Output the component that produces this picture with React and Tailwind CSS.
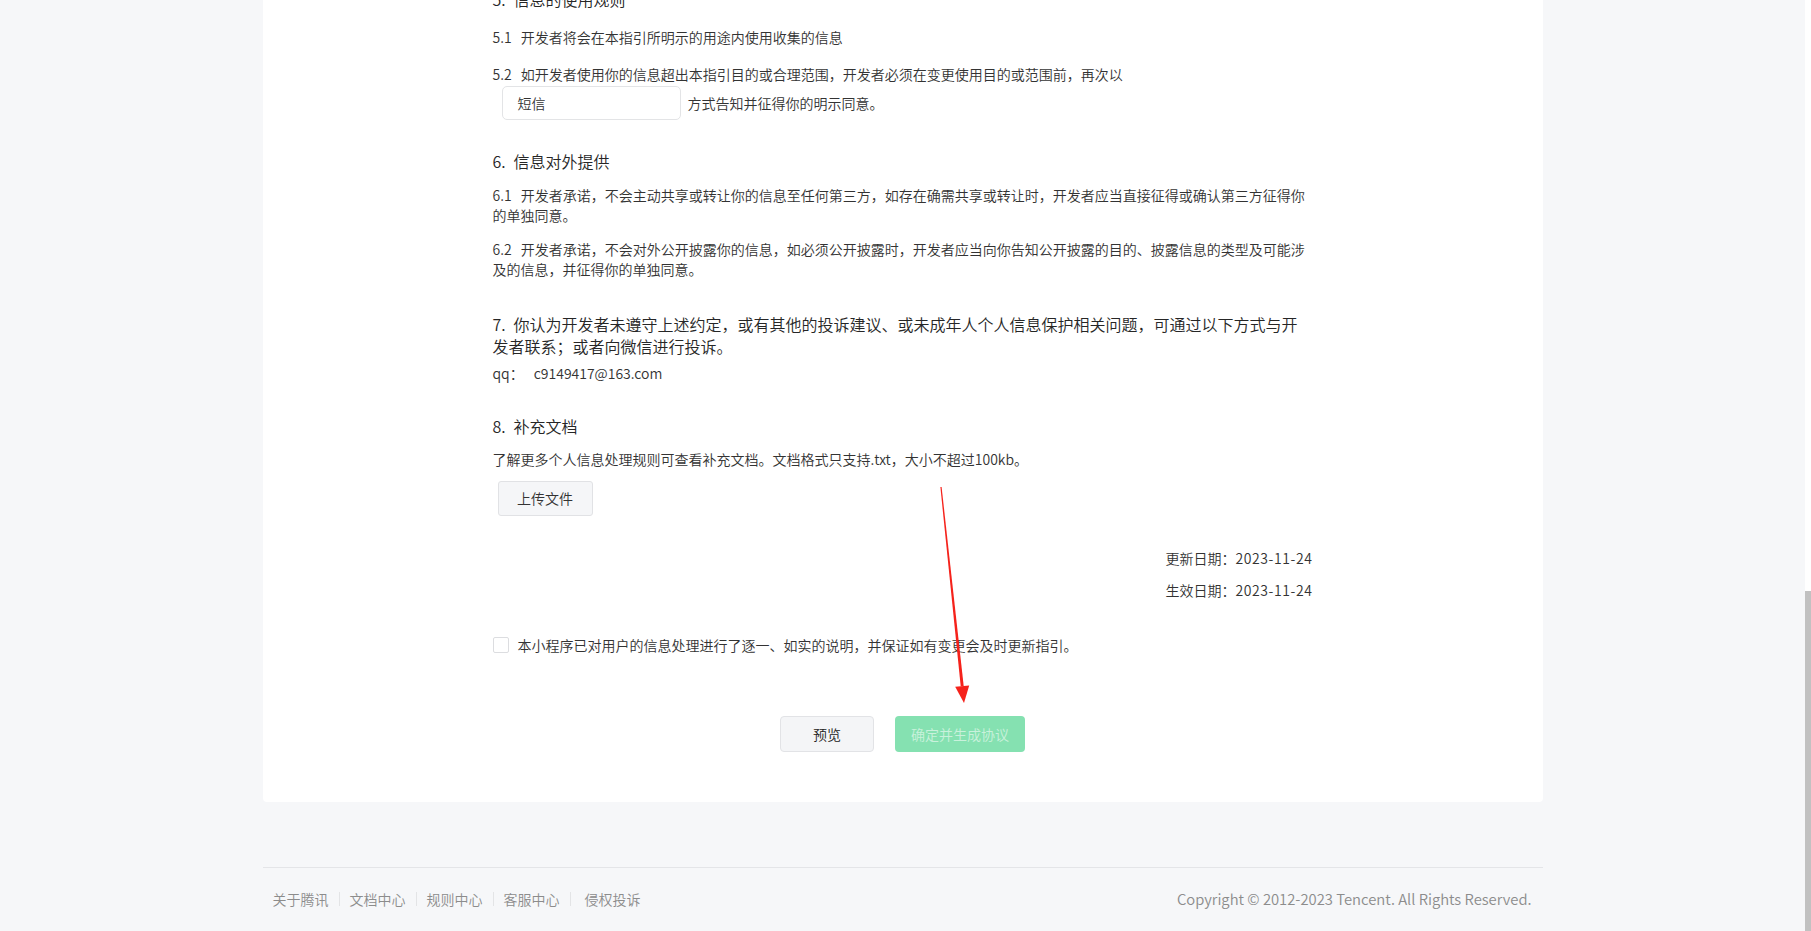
import React from "react";

const FONT = { fontFamily: '"Noto Sans CJK SC", "Noto Sans", sans-serif' };

function Heading({ num, children, className = "" }) {
  return (
    <h3 className={"text-[16px] leading-[24px] text-[#262626] font-[350] " + className}>
      <span className="mr-[8px]">{num}</span>
      {children}
    </h3>
  );
}

function Para({ num, children, className = "" }) {
  return (
    <p className={"text-[14px] leading-[20px] text-[#333] font-[350] " + className}>
      {num && <span className="mr-[9px]">{num}</span>}
      {children}
    </p>
  );
}

export default function App() {
  return (
    <div className="relative flex w-[1811px] h-[931px] bg-[#f6f7f9] overflow-hidden" style={FONT}>
      <div className="flex-1 h-full overflow-hidden flex flex-col items-center">
        {/* Card */}
        <div className="w-[1280px] bg-white rounded-b-[4px] flex flex-col pb-[50px]">
          <div className="w-[820px] mx-auto flex flex-col -mt-[13px]">
            <Heading num="5.">信息的使用规则</Heading>
            <Para num="5.1" className="mt-[16px]">开发者将会在本指引所明示的用途内使用收集的信息</Para>
            <Para num="5.2" className="mt-[17px]">
              如开发者使用你的信息超出本指引目的或合理范围，开发者必须在变更使用目的或范围前，再次以
            </Para>
            <div className="flex items-center pl-[9px] mt-[2px]">
              <div className="w-[179px] h-[34px] border border-[#e3e4e6] rounded-[5px] px-[15px] flex items-center text-[14px] text-[#333] font-[350]">
                短信
              </div>
              <span className="ml-[7px] text-[14px] leading-[20px] text-[#333] font-[350]">方式告知并征得你的明示同意。</span>
            </div>

            <Heading num="6." className="mt-[29px]">信息对外提供</Heading>
            <Para num="6.1" className="mt-[12px]">
              开发者承诺，不会主动共享或转让你的信息至任何第三方，如存在确需共享或转让时，开发者应当直接征得或确认第三方征得你的单独同意。
            </Para>
            <Para num="6.2" className="mt-[14px]">
              开发者承诺，不会对外公开披露你的信息，如必须公开披露时，开发者应当向你告知公开披露的目的、披露信息的类型及可能涉及的信息，并征得你的单独同意。
            </Para>

            <h3 className="mt-[34px] text-[16px] leading-[22px] text-[#262626] font-[350]">
              <span className="mr-[8px]">7.</span>
              你认为开发者未遵守上述约定，或有其他的投诉建议、或未成年人个人信息保护相关问题，可通过以下方式与开发者联系；或者向微信进行投诉。
            </h3>
            <p className="mt-[6px] text-[14px] leading-[20px] text-[#333] font-[350]">
              <span className="mr-[10px]">qq：</span>c9149417@163.com
            </p>

            <Heading num="8." className="mt-[31px]">补充文档</Heading>
            <Para className="mt-[11px]">了解更多个人信息处理规则可查看补充文档。文档格式只支持.txt，大小不超过100kb。</Para>
            <div className="mt-[12px] ml-[5px]">
              <button className="w-[95px] h-[35px] bg-[#f5f6f8] border border-[#e1e2e5] rounded-[3px] text-[14px] text-[#333] font-[350] flex items-center justify-center">
                上传文件
              </button>
            </div>

            <div className="mt-[32px] flex flex-col items-end text-[14px] leading-[20px] text-[#333] font-[350]">
              <p>更新日期：<span className="tracking-[0.6px]">2023-11-24</span></p>
              <p className="mt-[12px]">生效日期：<span className="tracking-[0.6px]">2023-11-24</span></p>
            </div>

            <div className="mt-[35px] flex items-center h-[20px]">
              <span className="w-[16px] h-[16px] border border-[#dcdde0] rounded-[2px] bg-white shrink-0" />
              <span className="ml-[9px] text-[14px] leading-[20px] text-[#333] font-[350]">
                本小程序已对用户的信息处理进行了逐一、如实的说明，并保证如有变更会及时更新指引。
              </span>
            </div>

            <div className="mt-[61px] flex justify-center gap-[21px]">
              <button className="w-[94px] h-[36px] bg-[#f4f5f7] border border-[#e2e3e6] rounded-[4px] text-[14px] text-[#222] font-[350] flex items-center justify-center">
                预览
              </button>
              <button className="w-[130px] h-[36px] bg-[#85e1b1] rounded-[4px] text-[14px] text-[#c9f1dc] font-[350] flex items-center justify-center">
                确定并生成协议
              </button>
            </div>
          </div>
        </div>

        {/* Footer */}
        <div className="w-[1280px] mt-[65px] border-t border-[#e4e5e8] flex justify-between pt-[21px]">
          <div className="flex items-center text-[14px] leading-[20px] text-[#8c8c8c] font-[350]">
            <span className="px-[10px]">关于腾讯</span>
            <span className="w-px h-[14px] bg-[#e3e4e6]" />
            <span className="px-[10px]">文档中心</span>
            <span className="w-px h-[14px] bg-[#e3e4e6]" />
            <span className="px-[10px]">规则中心</span>
            <span className="w-px h-[14px] bg-[#e3e4e6]" />
            <span className="px-[10px]">客服中心</span>
            <span className="w-px h-[14px] bg-[#e3e4e6]" />
            <span className="px-[10px] ml-[4px]">侵权投诉</span>
          </div>
          <div className="pr-[11px] text-[14.8px] leading-[20px] text-[#8c8c8c] font-[350]">
            Copyright © 2012-2023 Tencent. All Rights Reserved.
          </div>
        </div>
      </div>

      {/* Scrollbar */}
      <div className="w-[6px] h-full bg-white flex flex-col justify-end">
        <div className="h-[340px] bg-[#c1c1c1]" />
      </div>

      {/* Red annotation arrow */}
      <svg className="absolute left-0 top-0 pointer-events-none" width="1811" height="931" viewBox="0 0 1811 931">
        <polygon points="940.4,487.1 941.6,486.9 963.7,685.9 960.7,686.3" fill="#f5221b" />
        <polygon points="964,703 969.2,685.4 955.2,686.8" fill="#f5221b" />
      </svg>
    </div>
  );
}
